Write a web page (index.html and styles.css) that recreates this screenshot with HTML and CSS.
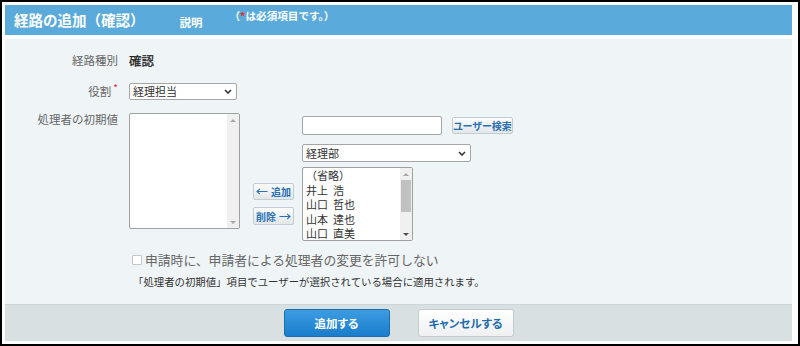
FILE: index.html
```html
<!DOCTYPE html>
<html lang="ja">
<head>
<meta charset="utf-8">
<title>経路の追加（確認）</title>
<link rel="stylesheet" href="styles.css">
</head>
<body>
<div class="frame">
  <div class="panel">
    <div class="header">
      <h1 class="title">経路の追加（確認）</h1>
      <span class="help">説明</span>
      <span class="notice">（<span class="req-h">*</span>は必須項目です。）</span>
    </div>
    <div class="content">
      <div class="form">
        <div class="label">経路種別</div>
        <div class="value strong">確認</div>

        <div class="label">役割<span class="req">*</span></div>
        <div class="value">
          <div class="select role"><span>経理担当</span><svg class="chev" width="8" height="5" viewBox="0 0 8 5"><path d="M1 1 L4 4 L7 1" fill="none" stroke="#333" stroke-width="1.6"/></svg></div>
        </div>

        <div class="label top">処理者の初期値</div>
        <div class="value picker">
          <div class="listbox initial">
            <div class="items"></div>
            <div class="sb">
              <div class="sb-btn"><span class="up"></span></div>
              <div class="sb-fill"></div>
              <div class="sb-btn"><span class="down"></span></div>
            </div>
          </div>
          <div class="mid">
            <button class="btn-sm move"><svg class="arrow" width="12" height="7" viewBox="0 0 12 7"><path d="M11.5 3.5 H1 M3.8 0.8 L1 3.5 L3.8 6.2" fill="none" stroke="#2a70b3" stroke-width="1.1"/></svg><span>追加</span></button>
            <button class="btn-sm move del"><span>削除</span><svg class="arrow" width="12" height="7" viewBox="0 0 12 7"><path d="M0.5 3.5 H11 M8.2 0.8 L11 3.5 L8.2 6.2" fill="none" stroke="#2a70b3" stroke-width="1.1"/></svg></button>
          </div>
          <div class="right">
            <div class="search-row">
              <div class="textbox"></div>
              <button class="btn-sm search">ユーザー検索</button>
            </div>
            <div class="select dept"><span>経理部</span><svg class="chev" width="8" height="5" viewBox="0 0 8 5"><path d="M1 1 L4 4 L7 1" fill="none" stroke="#333" stroke-width="1.6"/></svg></div>
            <div class="listbox users">
              <div class="items">
                <div class="item">（省略）</div>
                <div class="item">井上&nbsp;&nbsp;浩</div>
                <div class="item">山口&nbsp;&nbsp;哲也</div>
                <div class="item">山本&nbsp;&nbsp;達也</div>
                <div class="item">山口&nbsp;&nbsp;直美</div>
              </div>
              <div class="sb">
                <div class="sb-btn"><span class="up"></span></div>
                <div class="thumb"></div>
                <div class="sb-fill"></div>
                <div class="sb-btn"><span class="down dark"></span></div>
              </div>
            </div>
          </div>
        </div>
      </div>
      <div class="options">
        <div class="check-row"><span class="checkbox"></span><span>申請時に、申請者による処理者の変更を許可しない</span></div>
        <div class="note">「処理者の初期値」項目でユーザーが選択されている場合に適用されます。</div>
      </div>
    </div>
    <div class="footer">
      <button class="btn-primary">追加する</button>
      <button class="btn-cancel">キャンセルする</button>
    </div>
  </div>
</div>
</body>
</html>
```

FILE: styles.css
```css
* { box-sizing: border-box; }
html, body { margin: 0; padding: 0; }
body {
  width: 800px;
  height: 346px;
  overflow: hidden;
  background: #fff;
  font-family: "Noto Sans CJK JP", "Noto Sans", sans-serif;
}
.frame {
  width: 800px;
  height: 346px;
  border: 2px solid #000;
  padding: 3px 6px 3px 3px;
  background: #fff;
}
.panel {
  height: 100%;
  display: flex;
  flex-direction: column;
}

/* header */
.header {
  flex: none;
  height: 30px;
  margin-bottom: 4px;
  padding-left: 9px;
  background: #5aaadb;
  color: #fff;
  display: flex;
  align-items: center;
}
.title {
  margin: 0;
  font-size: 14.5px;
  font-weight: bold;
  line-height: 18px;
}
.help {
  margin-left: 35px;
  margin-top: 3px;
  font-size: 11.5px;
  font-weight: bold;
  line-height: 14px;
}
.notice {
  align-self: flex-start;
  margin-top: 5px;
  margin-left: 27px;
  font-size: 10.6px;
  font-weight: bold;
  line-height: 12px;
}
.req-h { color: #e3262b; }

/* content */
.content {
  flex: none;
  height: 265px;
  padding-top: 13px;
  background: #eff4f7;
}
.form {
  display: grid;
  grid-template-columns: 113px 1fr;
  column-gap: 11px;
  row-gap: 13px;
}
.label {
  text-align: right;
  font-size: 11.5px;
  line-height: 17px;
  color: #666;
  white-space: nowrap;
}
.label.top { line-height: 12px; }
.req {
  color: #e3262b;
  font-size: 10px;
  line-height: 1;
  vertical-align: top;
  margin-left: 2px;
}
.value { font-size: 11px; color: #333; }
.value.strong {
  font-size: 12.5px;
  line-height: 18px;
  color: #222;
  -webkit-text-stroke: 0.25px #222;
}

/* selects */
.select {
  height: 17px;
  padding: 0 4px 0 3px;
  border: 1px solid #a6a6a6;
  border-radius: 2px;
  background: #fff;
  display: flex;
  align-items: center;
  justify-content: space-between;
  font-size: 11px;
  line-height: 15px;
  color: #333;
}
.select.role { width: 108px; }
.select.dept { width: 169px; margin-top: 9px; height: 18px; }
.chev { flex: none; }

/* picker */
.picker {
  display: flex;
  align-items: flex-start;
}
.listbox {
  border: 1px solid #a0a0a0;
  border-radius: 2px;
  background: #fff;
  display: flex;
}
.listbox.initial { width: 111px; height: 116px; }
.listbox.users { width: 111px; height: 74px; margin-top: 5px; }
.items {
  flex: 1;
  min-width: 0;
  padding-left: 3px;
  overflow: hidden;
  font-size: 11px;
  line-height: 14.5px;
  color: #333;
}
.item { white-space: nowrap; }
.sb {
  flex: none;
  width: 12px;
  background: #f0f0f0;
  display: flex;
  flex-direction: column;
  align-items: center;
}
.sb-btn {
  flex: none;
  height: 12px;
  width: 100%;
  display: flex;
  align-items: center;
  justify-content: center;
}
.sb-fill { flex: 1; }
.thumb {
  flex: none;
  width: 10px;
  height: 32px;
  background: #c1c1c1;
}
.up {
  width: 0; height: 0;
  border-left: 3px solid transparent;
  border-right: 3px solid transparent;
  border-bottom: 3px solid #a8a8a8;
}
.down {
  width: 0; height: 0;
  border-left: 3px solid transparent;
  border-right: 3px solid transparent;
  border-top: 3px solid #a8a8a8;
}
.down.dark { border-top-color: #505050; }

.mid {
  margin-left: 13px;
  margin-top: 70px;
  width: 41px;
  display: flex;
  flex-direction: column;
  gap: 7px;
}
.btn-sm {
  height: 17px;
  padding: 0;
  border: 1px solid #c3ccd2;
  border-radius: 2px;
  background: linear-gradient(#fbfcfc, #e2e7ea);
  color: #2a70b3;
  font-family: inherit;
  font-size: 10px;
  font-weight: bold;
  line-height: 15px;
  white-space: nowrap;
}
.btn-sm.move {
  width: 41px;
  display: flex;
  align-items: center;
  justify-content: center;
  gap: 3px;
}
.arrow { flex: none; }
.btn-sm.del { height: 18px; }
.right {
  margin-left: 8px;
  margin-top: 3px;
  display: flex;
  flex-direction: column;
}
.search-row {
  display: flex;
  align-items: flex-start;
  gap: 10px;
}
.textbox {
  width: 140px;
  height: 19px;
  border: 1px solid #a6a6a6;
  border-radius: 2px;
  background: #fff;
}
.btn-sm.search {
  width: 61px;
  margin-top: 1px;
  font-feature-settings: "palt";
}

/* options */
.options {
  margin-top: 10px;
  margin-left: 127px;
}
.check-row {
  display: flex;
  align-items: center;
  font-size: 12.8px;
  line-height: 18px;
  color: #666;
}
.checkbox {
  width: 10px;
  height: 10px;
  margin-right: 3px;
  border: 1px solid #c6c6c6;
  border-radius: 1px;
  background: #fff;
}
.note {
  margin-top: 6px;
  margin-left: 1px;
  font-size: 10.4px;
  line-height: 14px;
  color: #333;
}

/* footer */
.footer {
  flex: none;
  height: 37px;
  border-top: 1px solid #ccd5d8;
  background: #d8e0e2;
  display: flex;
  align-items: center;
  justify-content: center;
  gap: 28px;
}
.btn-primary, .btn-cancel {
  height: 28px;
  padding: 0;
  border-radius: 3px;
  font-family: inherit;
  font-size: 11.5px;
  font-weight: bold;
  font-feature-settings: "palt";
}
.btn-primary {
  width: 106px;
  border: 1px solid #1b6db0;
  background: linear-gradient(#3d9de3, #1a7dcc);
  color: #fff;
}
.btn-cancel {
  width: 96px;
  border: 1px solid #c6cbcf;
  background: linear-gradient(#ffffff, #eef0f1);
  color: #1f6cb0;
}
```
